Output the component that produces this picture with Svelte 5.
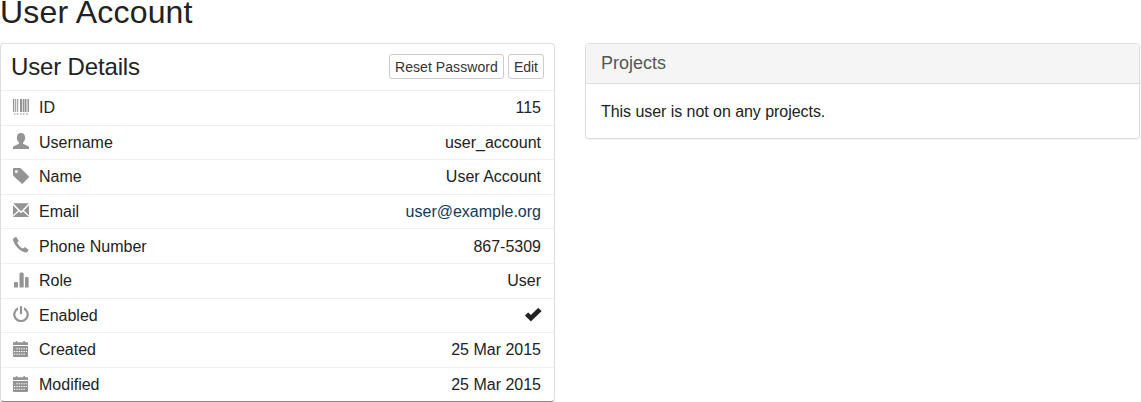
<script>
  const rows = [
    { icon: 'barcode', label: 'ID', value: '115' },
    { icon: 'user', label: 'Username', value: 'user_account' },
    { icon: 'tag', label: 'Name', value: 'User Account' },
    { icon: 'mail', label: 'Email', value: 'user@example.org', link: true },
    { icon: 'phone', label: 'Phone Number', value: '867-5309' },
    { icon: 'stats', label: 'Role', value: 'User' },
    { icon: 'power', label: 'Enabled', check: true },
    { icon: 'calendar', label: 'Created', value: '25 Mar 2015' },
    { icon: 'calendar', label: 'Modified', value: '25 Mar 2015' }
  ];
</script>

<h1>User Account</h1>
<main>
  <section class="panel details">
    <header>
      <h2>User Details</h2>
      <div class="actions">
        <button>Reset Password</button>
        <button>Edit</button>
      </div>
    </header>
    <ul>
      {#each rows as row}
        <li>
          <svg class="icon" viewBox="0 0 16 16" aria-hidden="true">
            {#if row.icon === 'barcode'}
              <path d="M0 0h1.300v13H0zM2.200 0h1v13h-1zM4.200 0h1v13h-1zM7 0h2.300v13H7zM10 0h1.200v13H10zM11.700 0h1.500v13h-1.500zM13.700 0h.8v13h-.8zM15 0h1v13h-1zM1 14.600h1.500v1H1zM3.500 14.600h2v1h-2zM7 14.600h1.500v1H7zM9.500 14.600h2v1h-2zM13 14.600h2v1h-2z" />
            {:else if row.icon === 'user'}
              <path d="M0 16v-1.200c0-.9.3-1.400 1.100-1.800l4-1.800c.6-.3.9-.6.9-1.200 0-.5-.3-.9-.7-1.300C4.600 8 4.200 7 4 6c-.3-.8-.3-1.500 0-2C4 1.500 5.600 0 8 0s4 1.500 4 4c.3.5.3 1.200 0 2-.2 1-.6 2-1.300 2.700-.4.4-.7.8-.7 1.300 0 .6.3.9.9 1.200l4 1.800c.8.4 1.100.9 1.100 1.800V16z" />
            {:else if row.icon === 'tag'}
              <path fill-rule="evenodd" d="M.7 0h6.100c.5 0 .9.2 1.200.5L15.700 8.300c.4.4.4.8 0 1.200l-5.900 6.100c-.4.4-.8.4-1.200 0L.5 7.900C.2 7.600 0 7.200 0 6.700V.7C0 .3.3 0 .7 0zM3.400 1.900a1.500 1.500 0 1 0 0 3 1.500 1.500 0 0 0 0-3z" />
            {:else if row.icon === 'mail'}
              <path d="M.2 .3h15.600L8 8.300zM0 2.300 5.100 7.400 0 12.200zM16 2.300v9.900l-5.100-4.800zM6.100 8.400 8 10.200l1.900-1.800 6 5.300V14H0v-.3z" />
            {:else if row.icon === 'phone'}
              <path d="M1.600.4 2.600 0c.4-.1.7 0 .9.3l1.900 3c.3.4.2.8-.1 1.100L4.200 5.500c.5 1.300 1.200 2.400 2.200 3.400s2.200 1.900 3.500 2.500l1.200-1c.3-.3.7-.3 1-.1l3 1.900c.4.2.5.6.3 1l-.7 1.300c-.5.7-1.100 1-2 .9-2.700-.4-5.400-1.900-7.900-4.400S.6 5.700.1 3C-.1 1.800.6.900 1.600.400z" />
            {:else if row.icon === 'stats'}
              <path d="M1 15.500V11q0-1 1-1h2q1 0 1 1v4.500zM6.500 15.500V2q0-1.500 1.500-1.500h1.200q1.500 0 1.500 1.500v13.500zM12 15.500V6q0-1 1-1h1.600q1 0 1 1v9.500z" />
            {:else if row.icon === 'power'}
              <rect x="6.900" y="0" width="2.200" height="8.300" rx="1" />
              <path d="M5 1.200v2.500a5.600 5.600 0 1 0 6 0V1.200a7.800 7.800 0 1 1-6 0z" />
            {:else}
              <path fill-rule="evenodd" d="M0 1.300h2.500V1q0-1 1-1t1 1v.3h5.700V1q0-1 1-1t1 1v.3H15V4H0zM0 5h15v10q0 1-1 1H1q-1 0-1-1zM3.300 7.200v1.100h1.300V7.200zM5.700 7.200v1.100H7V7.200zM8.100 7.200v1.100h1.300V7.200zM10.500 7.200v1.100h1.300V7.200zM12.900 7.200v1.100H14V7.200zM1 10v1h1.200v-1zM3.300 10v1h1.300v-1zM5.700 10v1H7v-1zM8.100 10v1h1.300v-1zM10.500 10v1h1.300v-1zM12.900 10v1H14v-1zM1 12.800v1h1.200v-1zM3.300 12.800v1h1.300v-1zM5.700 12.800v1H7v-1zM8.100 12.800v1h1.300v-1zM10.500 12.800v1h1.300v-1z" />
            {/if}
          </svg>
          <span class="label">{row.label}</span>
          {#if row.check}
            <svg class="check" viewBox="0 0 17 16" role="img" aria-label="Yes">
              <path d="M.3 8.200 2.800 5.700q.4-.4.800 0L5.900 8l6.900-6.800q.4-.4.800 0l2.700 2.500q.4.400 0 .8L6.300 14.100q-.4.400-.8 0L.3 9q-.4-.4 0-.8z" />
            </svg>
          {:else if row.link}
            <a href="mailto:user@example.org">{row.value}</a>
          {:else}
            <span>{row.value}</span>
          {/if}
        </li>
      {/each}
    </ul>
  </section>

  <section class="panel projects">
    <h3>Projects</h3>
    <p>This user is not on any projects.</p>
  </section>
</main>

<style>
  :global(body) {
    background: #fff;
    color: #222;
    font: 16px/22px "Liberation Sans", Arial, sans-serif;
    overflow: hidden;
  }
  h1, h2, h3, p, ul { margin: 0; padding: 0; font-weight: 400; }
  h1 { height: 43px; font-size: 32px; line-height: 24px; letter-spacing: .2px; }
  main { display: grid; grid-template-columns: 555px 555px; gap: 30px; align-items: start; }
  .panel {
    box-sizing: border-box;
    border: 1px solid #ddd;
    border-radius: 4px;
    background: #fff;
    box-shadow: 0 1px 1px rgba(0, 0, 0, .05);
  }
  .details { height: 359px; border-bottom-color: #888; }
  header { display: flex; align-items: center; justify-content: space-between; height: 46px; padding: 0 10px; }
  h2 { font-size: 24px; line-height: 46px; letter-spacing: -.15px; }
  .actions { display: flex; gap: 4px; margin-bottom: 1px; }
  button {
    box-sizing: border-box;
    height: 25px;
    padding: 2px 5px 0;
    border: 1px solid #ccc;
    border-radius: 3px;
    background: #fff;
    color: #333;
    font: 14px/21px "Liberation Sans", Arial, sans-serif;
  }
  button:first-child { letter-spacing: .07px; }
  ul { list-style: none; }
  li {
    box-sizing: border-box;
    display: flex;
    align-items: center;
    height: 34.6px;
    padding: 0 13px 0 12px;
    border-top: 1px solid #f0f0f0;
  }
  li > span, li > a { padding-top: .7px; }
  .icon { width: 16px; height: 16px; margin: -2px 10px 0 0; fill: #949494; }
  .label { flex: 1; }
  .check { width: 17px; height: 16px; margin: 0 -1px 0 0; fill: #222; }
  a { color: #103a56; text-decoration: none; }
  h3 {
    height: 39px;
    padding: 0 15px;
    border-bottom: 1px solid #ddd;
    border-radius: 3px 3px 0 0;
    background: #f5f5f5;
    color: #555;
    font-size: 18px;
    line-height: 38px;
  }
  .projects p { padding: 17px 15px 15px; letter-spacing: -.05px; }
</style>
